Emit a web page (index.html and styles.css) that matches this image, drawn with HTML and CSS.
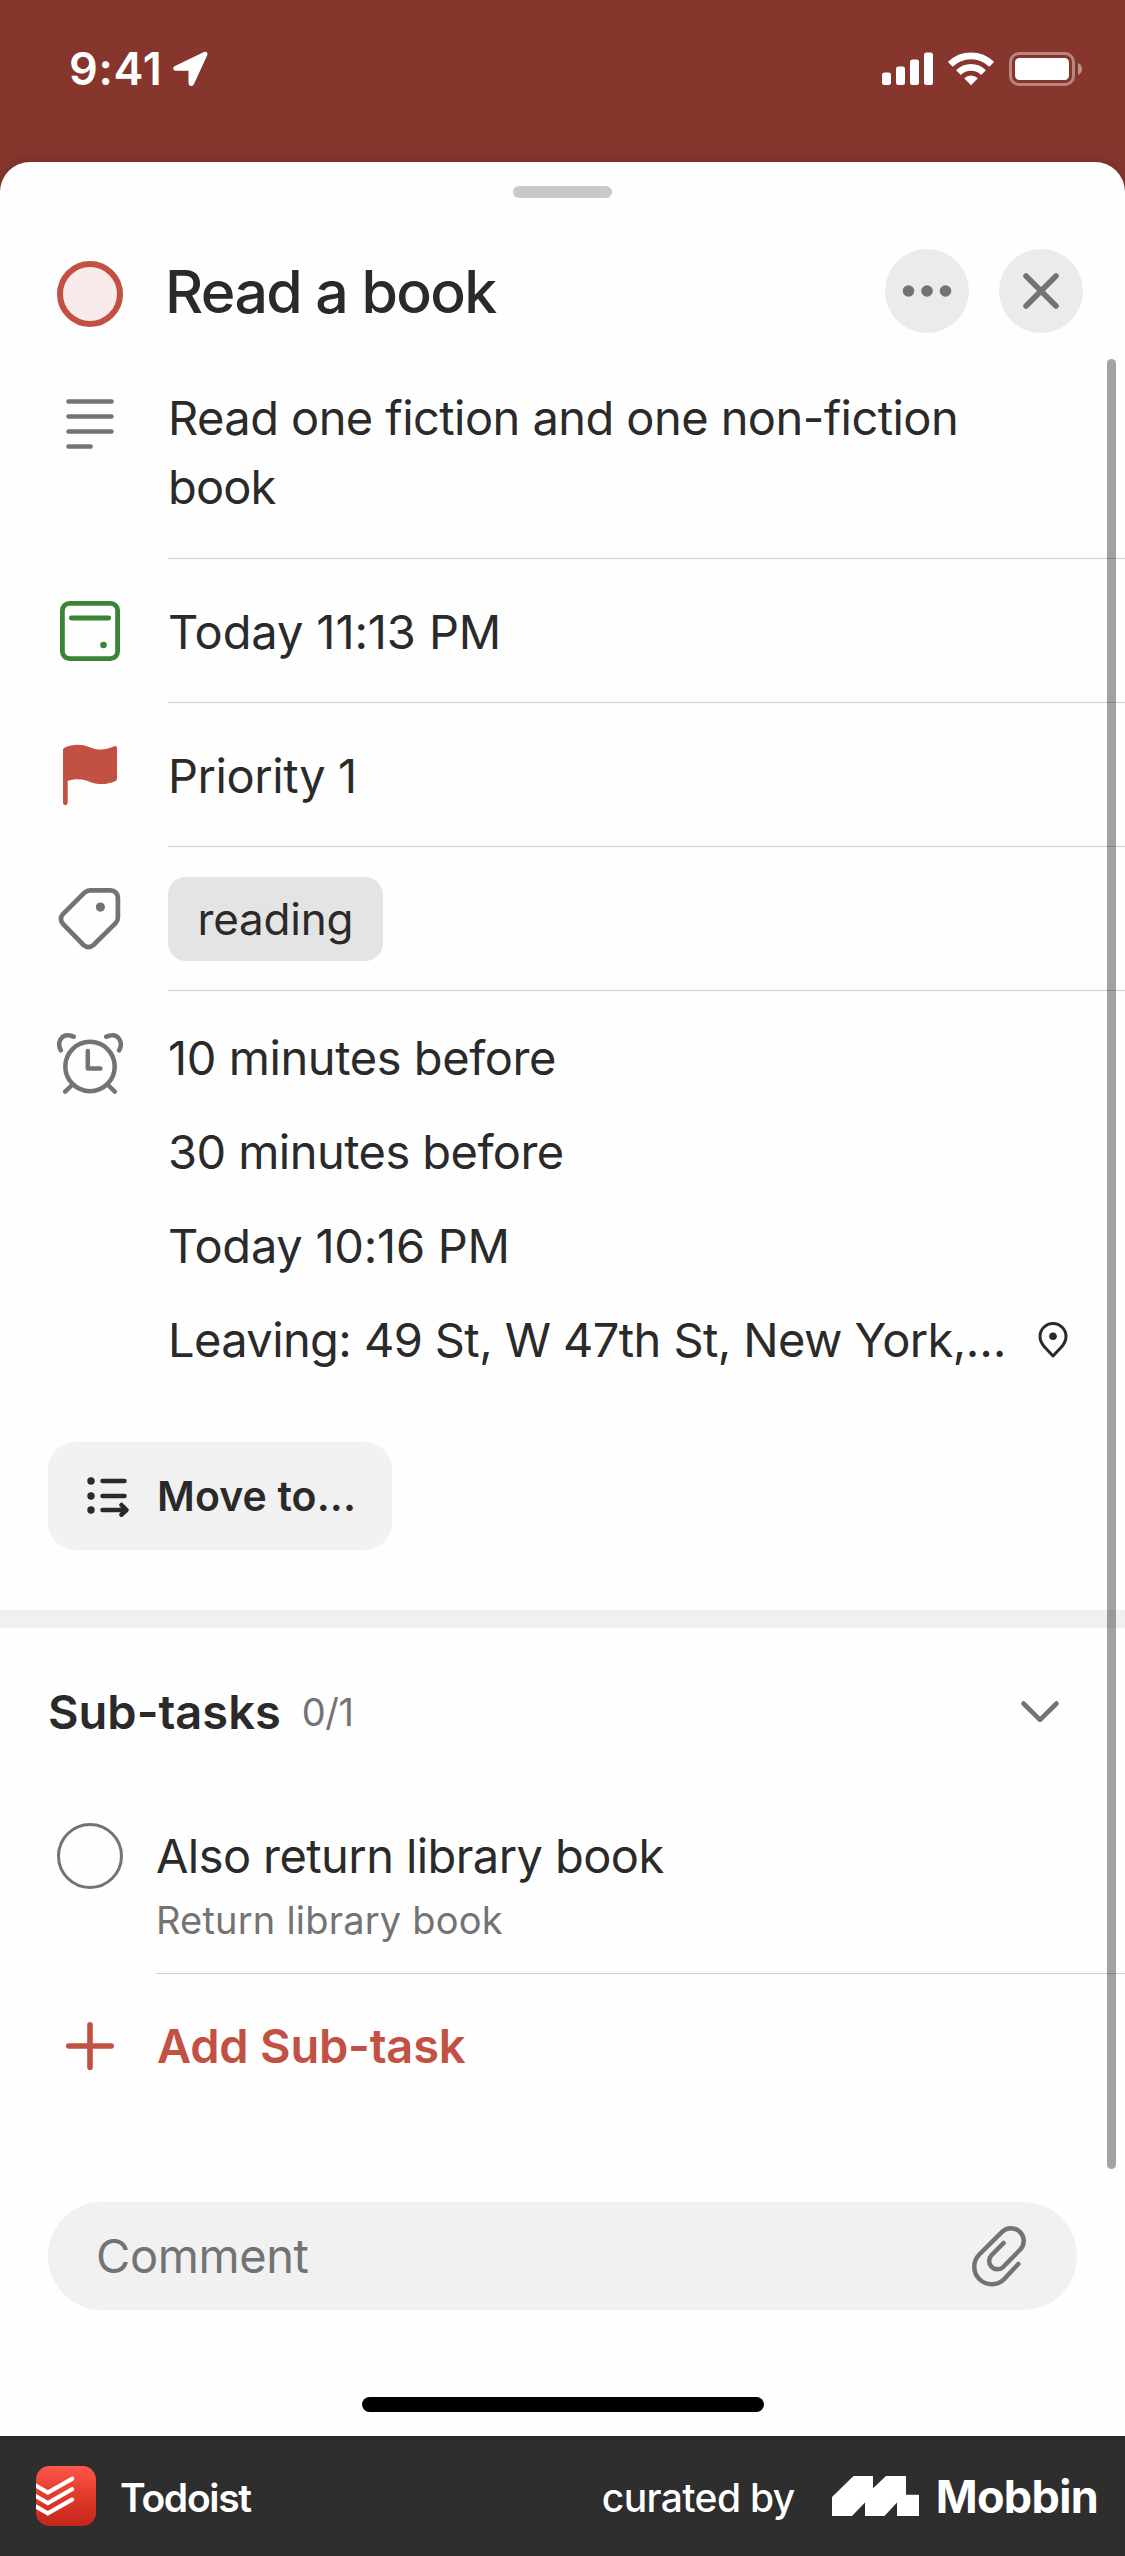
FILE: index.html
```html
<!DOCTYPE html>
<html lang="en">
<head>
<meta charset="utf-8">
<title>Read a book</title>
<link rel="stylesheet" href="styles.css">
</head>
<body>
<header class="status">
  <div class="status-left">
    <span class="time">9:41</span>
    <svg width="36" height="36" viewBox="0 0 36 36" fill="#fff"><path d="M31.5 1.3C34 0 36.2 1.5 35.2 4.3L22 33C20.5 36.2 16.5 35.5 16.5 32V19.7H3.8C.8 19.7.2 16.4 3 15Z"/></svg>
  </div>
  <div class="status-right">
    <svg width="51" height="34" viewBox="0 0 51 34" fill="#fff"><rect y="20.5" width="9" height="12.5" rx="2.5"/><rect x="14" y="14.5" width="9" height="18.5" rx="2.5"/><rect x="28" y="7.5" width="9" height="25.5" rx="2.5"/><rect x="42" y="0.5" width="9" height="32.5" rx="2.5"/></svg>
    <svg class="wifi" width="46" height="34" viewBox="0 0 46 34" fill="none" stroke="#fff" stroke-width="6.8"><path d="M2.3 12.3A29.5 29.5 0 0 1 43.7 12.3M10.5 20.6A17.8 17.8 0 0 1 35.5 20.6"/><path d="M16.2 26.2A10 10 0 0 1 29.8 26.2L23 33.2Z" fill="#fff" stroke="none"/></svg>
    <svg class="battery" width="74" height="34" viewBox="0 0 74 34"><rect x="1.5" y="1.5" width="63" height="31" rx="8.5" fill="none" stroke="#fff" stroke-opacity=".4" stroke-width="3"/><rect x="6" y="6" width="54" height="22" rx="4.5" fill="#fff"/><path d="M69 11Q73 13 73 17T69 23Z" fill="#fff" fill-opacity=".45"/></svg>
  </div>
</header>

<main class="sheet">
  <div class="handle"></div>
  <div class="title-row">
    <span class="check check-p1"></span>
    <h1>Read a book</h1>
    <button class="round"><svg width="84" height="84" viewBox="0 0 84 84" fill="#737373"><circle cx="23.5" cy="42" r="5.8"/><circle cx="42" cy="42" r="5.8"/><circle cx="60.5" cy="42" r="5.8"/></svg></button>
    <button class="round"><svg width="84" height="84" viewBox="0 0 84 84" fill="none" stroke="#737373" stroke-width="5.6" stroke-linecap="round"><path d="M27 27L57 57M57 27L27 57"/></svg></button>
  </div>

  <section class="row row-desc">
    <svg class="icon" width="66" height="66" viewBox="0 0 66 66" fill="none" stroke="#737373" stroke-width="4.6" stroke-linecap="round"><path d="M11.5 10.5H54.5M11.5 25.5H54.5M11.5 40.5H54.5M11.5 55.5H33.5"/></svg>
    <p class="cell desc">Read one fiction and one non-fiction<br><span class="tight">book</span></p>
  </section>

  <section class="row">
    <svg class="icon" width="66" height="66" viewBox="0 0 66 66" fill="none" stroke="#3a8435" stroke-width="4.8" stroke-linecap="round"><rect x="5.4" y="5.4" width="55.2" height="55.2" rx="7"/><path d="M14.3 20H51.7"/><circle cx="46.5" cy="47" r="3.3" fill="#3a8435" stroke="none"/></svg>
    <div class="cell date">Today 11:13 PM</div>
  </section>

  <section class="row">
    <svg class="icon" width="66" height="66" viewBox="0 0 66 66" fill="#c25043"><path d="M6 8C6 6.5 7 6 8 5.4C15 2 25 2 32 5C40 8.5 48 8.5 56.5 4.6C58.5 3.6 60 4 60 6.5V36C60 38 59 38.8 58 39.3C50 43 40 43 32 39.5C25 36.5 17 36.5 10.7 39V60.8A2.35 2.35 0 0 1 6 60.8Z"/></svg>
    <div class="cell">Priority 1</div>
  </section>

  <section class="row">
    <svg class="icon" width="66" height="66" viewBox="0 0 66 66" fill="none" stroke="#737373" stroke-width="4.7"><path d="M33 4.3H53.5A7.4 7.4 0 0 1 60.9 11.7V31.5Q60.900 34.8 58.6 37.2L36.5 59Q31.5 63.2 26.5 59L6 38Q1.8 32.9 6 28L27.5 6.7Q30 4.3 33 4.3Z"/><circle cx="43.4" cy="21.1" r="4.6" fill="#737373" stroke="none"/></svg>
    <div class="cell"><span class="chip">reading</span></div>
  </section>

  <section class="row row-reminders">
    <svg class="icon" width="66" height="66" viewBox="0 0 66 66" fill="none" stroke="#737373" stroke-width="4.5" stroke-linecap="round" stroke-linejoin="round"><circle cx="33" cy="35.5" r="24.7"/><path d="M30.8 20V37.5H43.4M3.9 19.3C-.5 11.5 4.5 3 12.5 4.4Q15 4.7 16.8 5.7M62.1 19.3C66.5 11.5 61.5 3 53.5 4.4Q51 4.7 49.2 5.7M8.2 60.6L15.5 53.5M57.8 60.6L50.5 53.5"/></svg>
    <ul class="cell reminders">
      <li>10 minutes before</li>
      <li class="r30">30 minutes before</li>
      <li class="rtime">Today 10:16 PM</li>
      <li class="rplace"><span>Leaving: 49 St, W 47th St, New York,…</span><svg width="34" height="40" viewBox="0 0 34 40" fill="none" stroke="#2a2a2a" stroke-width="3" stroke-linejoin="round"><path d="M17 36L9 27.5C5.8 24 4 20.3 4 16.5A13 13 0 0 1 30 16.5C30 20.3 28.2 24 25 27.5Z"/><circle cx="17" cy="16.3" r="3.8" fill="#2a2a2a" stroke="none"/></svg></li>
    </ul>
  </section>

  <button class="move">
    <svg width="42" height="42" viewBox="0 0 42 42" fill="none" stroke="#2a2a2a" stroke-width="4.5" stroke-linecap="round" stroke-linejoin="round"><path d="M15.5 6H37.5M15.5 21H37.5M15.5 35H38.5M34.5 30L39.5 35L34.5 39.7"/><g fill="#2a2a2a" stroke="none"><circle cx="4" cy="6" r="3.7"/><circle cx="4" cy="21" r="3.7"/><circle cx="4" cy="35" r="3.7"/></g></svg>
    <span>Move to...</span>
  </button>

  <div class="band"></div>

  <div class="sub-head">
    <h2>Sub-tasks</h2><span class="count">0/1</span>
    <svg width="40" height="24" viewBox="0 0 40 24" fill="none" stroke="#737373" stroke-width="4.6" stroke-linecap="round" stroke-linejoin="round"><path d="M3.5 3.5L20 19.8L36.5 3.5"/></svg>
  </div>
  <div class="subtask">
    <span class="check"></span>
    <div class="subtask-body">
      <div class="subtask-name">Also return library book</div>
      <div class="subtask-note">Return library book</div>
    </div>
  </div>
  <div class="add">
    <svg width="48" height="48" viewBox="0 0 48 48" stroke="#c25043" stroke-width="5.6" stroke-linecap="round"><path d="M24 2.8V45.2M2.8 24H45.2"/></svg>
    <span>Add Sub-task</span>
  </div>

  <div class="comment">
    <span>Comment</span>
    <svg width="60" height="66" viewBox="0 0 60 66" fill="none" stroke="#737373" stroke-width="4.5" stroke-linecap="round"><path d="M49.3 41L35.3 56A17.4 17.4 0 0 1 10.3 31.5L33.3 8.6A12.7 12.7 0 0 1 51.3 26.500L34.2 44A8.2 8.2 0 0 1 22.6 32.2L34.6 20"/></svg>
  </div>
  <div class="home"></div>
  <div class="scrollbar"></div>
</main>

<footer class="footer">
  <svg class="app" width="60" height="60" viewBox="0 0 60 60"><defs><linearGradient id="g" x2="0" y2="1"><stop stop-color="#ff584b"/><stop offset=".5" stop-color="#e03a2c"/><stop offset="1" stop-color="#c5261a"/></linearGradient></defs><rect width="60" height="60" rx="13.5" fill="url(#g)"/><path d="M0 19.7L11.8 26.5L36 12.8M0 30.2L11.8 37L36 23.2M0 40.6L11.8 47.4L36 33.6" fill="none" stroke="#fff" stroke-width="4.2" stroke-linecap="round"/></svg>
  <span class="app-name">Todoist</span>
  <span class="curated">curated by</span>
  <svg width="87" height="40" viewBox="0 0 87 40" fill="#fff"><path d="M0 21L21.5 0H41V12.3L54 0H74V18.7H87V40H65V26.5L52.5 40H33V26.5L20 40H0Z"/></svg>
  <span class="mobbin">Mobbin</span>
</footer>
</body>
</html>
```
FILE: styles.css
```css
* {
  box-sizing: border-box;
  margin: 0;
  padding: 0;
}

body {
  width: 1125px;
  background: #87362e;
  color: #2a2a2a;
  font-family: Inter, "Liberation Sans", sans-serif;
  font-size: 47px;
  letter-spacing: -0.42px;
  overflow: hidden;
}

svg {
  display: block;
  flex: none;
}

button {
  border: 0;
  font: inherit;
  color: inherit;
}

/* Status bar */
.status {
  height: 162px;
  padding: 0 43px 24px 69px;
  display: flex;
  align-items: center;
  justify-content: space-between;
  color: #fff;
}

.status-left,
.status-right {
  display: flex;
  align-items: center;
}

.status-left svg {
  margin-left: 9px;
}

.time {
  font-size: 45px;
  font-weight: 600;
  letter-spacing: 0.7px;
  line-height: 54px;
}

.wifi {
  margin-left: 15px;
}

.battery {
  margin-left: 15px;
  margin-right: -1px;
}

/* Sheet */
.sheet {
  position: relative;
  height: 2274px;
  padding-top: 24px;
  display: flex;
  flex-direction: column;
  background: #fefefe;
  border-radius: 30px 30px 0 0;
  box-shadow: 0 0 14px rgba(0, 0, 0, 0.2);
}

.handle {
  align-self: center;
  width: 99px;
  height: 12px;
  border-radius: 6px;
  background: #c9c9c9;
}

.title-row {
  height: 84px;
  margin-top: 51px;
  padding: 0 42px 0 57px;
  display: flex;
  align-items: center;
}

h1 {
  flex: 1;
  margin-left: 42px;
  padding-top: 2px;
  font-size: 59px;
  font-weight: 500;
  letter-spacing: -1.6px;
  line-height: 82px;
}

.round {
  width: 84px;
  height: 84px;
  margin-left: 30px;
  border-radius: 50%;
  background: #ebebeb;
}

.check {
  flex: none;
  width: 66px;
  height: 66px;
  border: 3px solid #737373;
  border-radius: 50%;
}

.check-p1 {
  margin-top: 6px;
  border: 6px solid #c25043;
  background: #f9ebea;
}

/* Detail rows */
.row {
  height: 144px;
  padding-left: 57px;
  display: flex;
  align-items: stretch;
}

.icon {
  align-self: center;
  margin-right: 45px;
}

.cell {
  flex: 1;
  padding-top: 1px;
  display: flex;
  align-items: center;
  border-bottom: 1px solid #cecece;
}

.row-desc {
  height: 226px;
}

.row-desc .icon {
  align-self: flex-start;
  margin-top: 58px;
}

.desc {
  display: block;
  padding-top: 50px;
  line-height: 69px;
  letter-spacing: -0.56px;
}

.tight {
  letter-spacing: -0.9px;
}

.date {
  letter-spacing: -0.1px;
}

.chip {
  width: 215px;
  height: 84px;
  border-radius: 18px;
  background: #e4e4e4;
  font-size: 44px;
  letter-spacing: -0.2px;
  line-height: 84px;
  text-align: center;
}

.row-reminders {
  height: 451px;
}

.row-reminders .icon {
  align-self: flex-start;
  margin-top: 40px;
}

.reminders {
  display: block;
  padding-top: 20px;
  border: 0;
  list-style: none;
  line-height: 94px;
}

.r30 {
  letter-spacing: -0.55px;
}

.rtime {
  letter-spacing: -0.25px;
}

.rplace {
  padding-right: 55px;
  display: flex;
  align-items: center;
  justify-content: space-between;
  letter-spacing: -0.6px;
  white-space: nowrap;
}

.move {
  width: 344px;
  height: 108px;
  margin-left: 48px;
  padding-left: 39px;
  display: flex;
  align-items: center;
  border-radius: 27px;
  background: #f1f1f1;
  font-size: 41px;
  font-weight: 600;
  letter-spacing: 0.1px;
}

.move svg {
  margin-right: 28px;
}

.band {
  height: 18px;
  margin-top: 60px;
  background: #f0f0f0;
}

/* Sub-tasks */
.sub-head {
  height: 168px;
  padding: 0 65px 0 48px;
  display: flex;
  align-items: center;
}

h2 {
  padding-bottom: 1px;
  font-size: 47px;
  font-weight: 600;
  letter-spacing: 0;
}

.count {
  flex: 1;
  margin-left: 21px;
  font-size: 38px;
  color: #737373;
}

.subtask {
  padding: 26px 0 0 57px;
  display: flex;
}

.subtask .check {
  margin-top: 1px;
}

.subtask-body {
  flex: 1;
  height: 152px;
  margin-left: 33px;
  border-bottom: 1px solid #cecece;
}

.subtask-name {
  line-height: 68px;
  letter-spacing: -0.58px;
}

.subtask-note {
  font-size: 38px;
  line-height: 60px;
  letter-spacing: 0.2px;
  color: #737373;
}

.add {
  height: 144px;
  padding-left: 66px;
  display: flex;
  align-items: center;
  gap: 43px;
  color: #c25043;
  font-weight: 600;
  letter-spacing: -0.22px;
}

.add span {
  padding-bottom: 2px;
}

.comment {
  height: 108px;
  margin: 84px 48px 0;
  padding: 0 48px;
  display: flex;
  align-items: center;
  justify-content: space-between;
  border-radius: 54px;
  background: #f1f1f1;
  color: #737373;
}

.comment span {
  padding-bottom: 2px;
}

.home {
  align-self: center;
  width: 402px;
  height: 15px;
  margin-top: 87px;
  border-radius: 8px;
  background: #000;
}

.scrollbar {
  position: absolute;
  top: 197px;
  right: 9px;
  width: 9px;
  height: 1810px;
  border-radius: 5px;
  background: rgba(0, 0, 0, 0.36);
}

/* Attribution bar */
.footer {
  height: 120px;
  padding: 0 27px 0 36px;
  display: flex;
  align-items: center;
  background: #2e2e2e;
  color: #fff;
}

.app-name {
  flex: 1;
  margin: 2px 0 0 24px;
  font-size: 39px;
  font-weight: 600;
  letter-spacing: -1.3px;
}

.curated {
  margin: 2px 37px 0 0;
  font-size: 39px;
  font-weight: 500;
  letter-spacing: -0.63px;
}

.mobbin {
  margin-left: 17px;
  font-size: 45px;
  font-weight: 700;
  letter-spacing: -0.69px;
}
```
